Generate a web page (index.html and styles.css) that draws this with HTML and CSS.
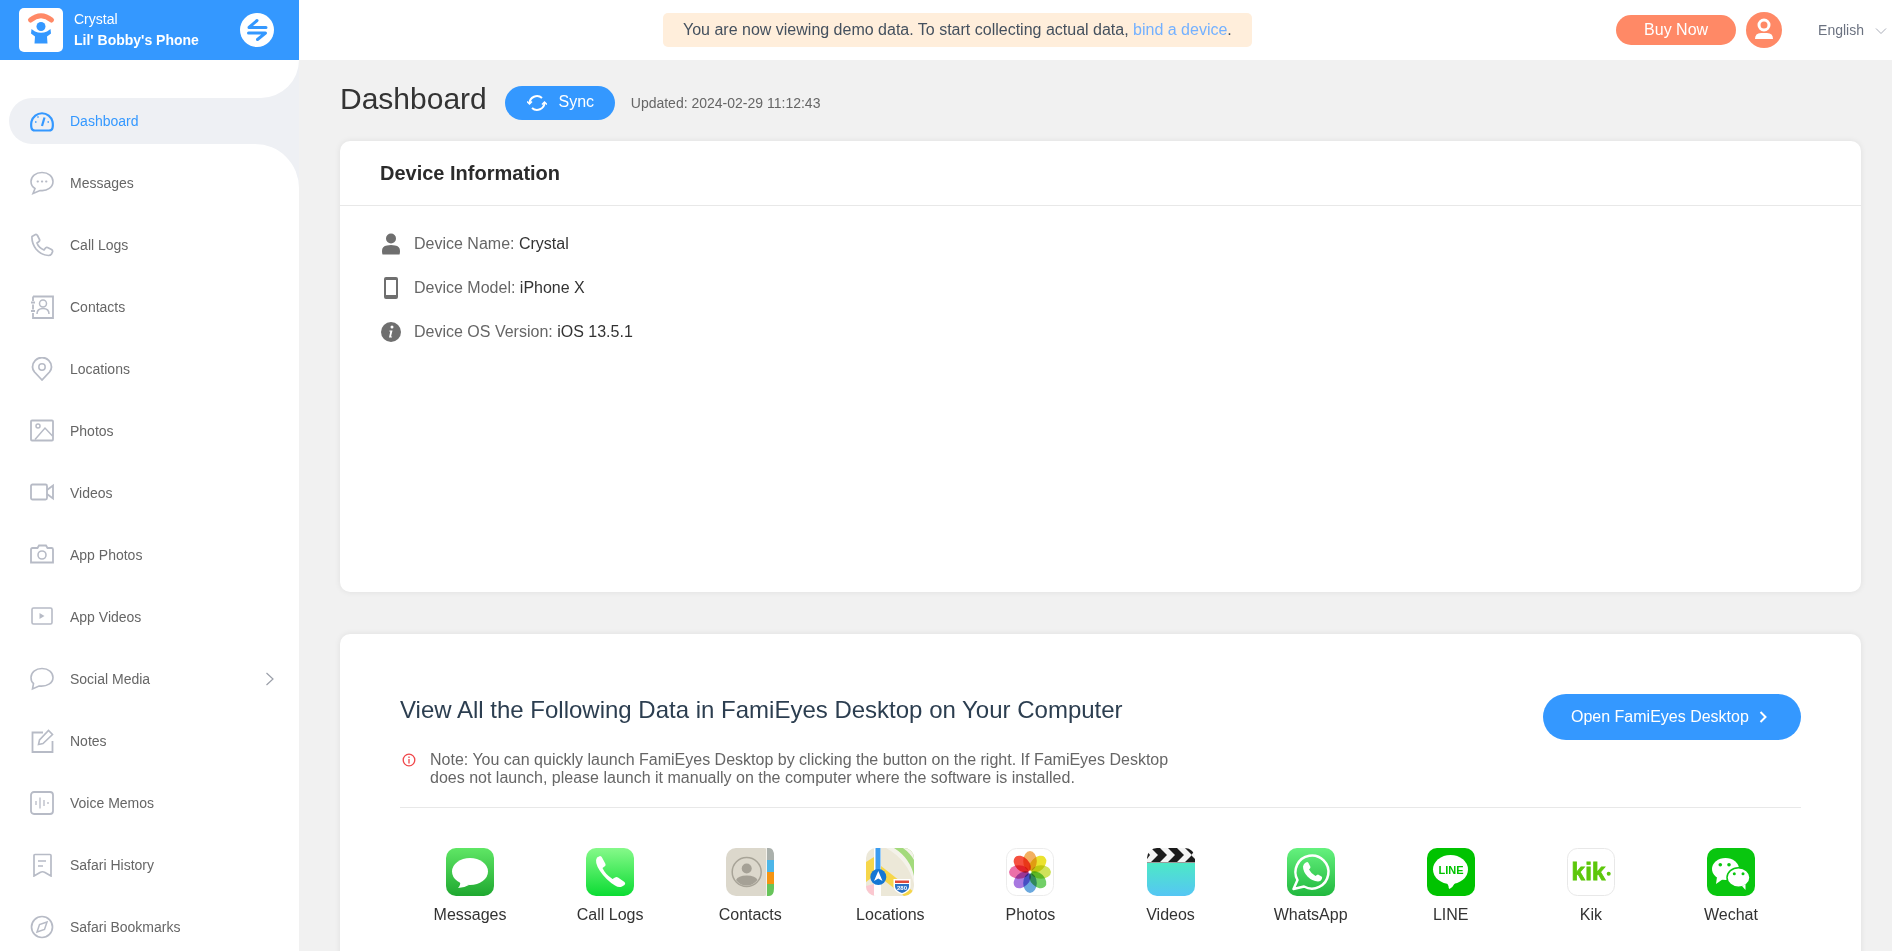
FILE: index.html
```html
<!DOCTYPE html>
<html lang="en">
<head>
    <meta charset="UTF-8">
    <meta name="viewport" content="width=device-width, initial-scale=1.0">
    <title>Dashboard</title>
    <link rel="stylesheet" href="styles.css">
</head>
<body>
    <header class="topbar">
        <div class="device">
            <div class="logo">
                <svg width="44" height="44" viewBox="0 0 44 44">
                    <path d="M11.500 12Q22 3.500 32.500 12" fill="none" stroke="#ff8966" stroke-width="5" stroke-linecap="round"/>
                    <circle cx="22" cy="18.500" r="4.500" fill="#3498ff"/>
                    <path d="M12.500 21L16 23.500Q22 26 28 23.500L31.500 21L32 25.500L28 28.500L28.500 35.500L15.500 35.500L16 28.500L12 25.500Z" fill="#3498ff"/>
                </svg>
            </div>
            <div class="device-text">
                <p>Crystal</p>
                <p class="device-phone">Lil' Bobby's Phone</p>
            </div>
            <div class="switch">
                <svg width="34" height="34" viewBox="0 0 34 34" fill="none" stroke="#3498ff" stroke-width="3" stroke-linecap="round" stroke-linejoin="round">
                    <path d="M26 14.500H9L17 7.500"/>
                    <path d="M8.500 20H25.500L17.500 26.500"/>
                </svg>
            </div>
        </div>
        <div class="banner">You are now viewing demo data. To start collecting actual data, <a href="#">bind a device</a>.</div>
        <div class="actions">
            <button type="button" class="buy">Buy Now</button>
            <div class="avatar">
                <svg width="36" height="36" viewBox="0 0 36 36" fill="#fff">
                    <circle cx="18" cy="13" r="5" fill="none" stroke="#fff" stroke-width="3"/>
                    <path d="M9 27Q9 21 15 21L21 21Q27 21 27 27Z"/>
                </svg>
            </div>
            <div class="lang">
                <span>English</span>
                <svg width="12" height="8" viewBox="0 0 12 8" fill="none" stroke="#a9adb8"><path d="M1 1.500L6 6.500L11 1.500"/></svg>
            </div>
        </div>
    </header>

    <div class="layout">
        <aside class="sidebar">
            <div class="side-top"></div>
            <div class="side-active">
                <a href="#" class="nav-item active">
                    <svg class="nav-icon" viewBox="0 0 24 24"><path d="M5 21.500Q2 21.500 1.500 19Q.8 16 1.500 12.500A10.800 10.800 0 0 1 22.500 12.500Q23.200 16 22.500 19Q22 21.500 19 21.500Z"/><path d="M14.500 8.500L12 17"/><path d="M5 13H6.500M17.500 13H19M7.500 7.500L8.500 8.500" stroke-width="1.500"/></svg>
                    Dashboard
                </a>
            </div>
            <nav class="side-rest">
                <a href="#" class="nav-item">
                    <svg class="nav-icon" viewBox="0 0 24 24"><path d="M12 1.500C5.500 1.500 1 5.500 1 10.500C1 13.500 2.500 16 5 17.500L3 22.500L10 19.500C17.500 20.500 23 16 23 10.500C23 5.500 18.500 1.500 12 1.500Z" stroke-width="1.600"/><path d="M7.500 10.500H8M11.800 10.500H12.300M16 10.500H16.500" stroke-linecap="round"/></svg>
                    Messages
                </a>
                <a href="#" class="nav-item">
                    <svg class="nav-icon" viewBox="0 0 24 24"><path d="M2 3.500L5.500 1.500Q6.500 1 7.500 2.500L9.500 6.500Q10 7.500 9 8.500L7 10Q8.500 14.500 14 17L15.500 15Q16.500 14 17.500 14.500L21.500 16.500Q23 17.500 22.500 19L21.500 21Q20.500 22.500 18.500 22.500Q11 22 6 16Q1.500 10 2 3.500Z" stroke-width="1.700"/></svg>
                    Call Logs
                </a>
                <a href="#" class="nav-item">
                    <svg class="nav-icon" viewBox="0 0 24 24"><path d="M3 1.500H23V23H3V18M3 14.500V9.500M3 6V1.500"/><path d="M1 7.500H5M1 16H5"/><circle cx="13" cy="8.500" r="3.500" stroke-width="1.500"/><path d="M7 19Q7 13.500 13 13.500Q19 13.500 19 19" stroke-width="1.500"/></svg>
                    Contacts
                </a>
                <a href="#" class="nav-item">
                    <svg class="nav-icon" viewBox="0 0 24 24"><path d="M12 23L4.500 15Q2.500 12.500 2.500 10A9.500 9.500 0 0 1 21.500 10Q21.500 12.500 19.500 15Z"/><circle cx="12" cy="10" r="3.200" stroke-width="1.500"/></svg>
                    Locations
                </a>
                <a href="#" class="nav-item">
                    <svg class="nav-icon" viewBox="0 0 24 24"><rect x="1" y="1.500" width="22" height="20" rx="1"/><circle cx="8" cy="7" r="2" stroke-width="1.500"/><path d="M5 20.500L15 9L22.500 17" stroke-width="1.500"/></svg>
                    Photos
                </a>
                <a href="#" class="nav-item">
                    <svg class="nav-icon" viewBox="0 0 24 24"><rect x="1" y="3.500" width="16" height="15" rx="1.500"/><path d="M17 9L23 4.500V17.500L17 13"/></svg>
                    Videos
                </a>
                <a href="#" class="nav-item">
                    <svg class="nav-icon" viewBox="0 0 24 24"><path d="M2.500 5H7.500L9 2.500H16L17.500 5H21.500Q23 5 23 6.500V19.500H1V6.500Q1 5 2.500 5Z"/><circle cx="12" cy="12" r="4" stroke-width="1.600"/></svg>
                    App Photos
                </a>
                <a href="#" class="nav-item">
                    <svg class="nav-icon" viewBox="0 0 24 24"><rect x="2" y="3" width="20" height="16" rx="1.500" stroke-width="1.600"/><path d="M9.500 8L14.500 11L9.500 14Z" fill="#b7bbc6" stroke="none"/></svg>
                    App Videos
                </a>
                <a href="#" class="nav-item">
                    <svg class="nav-icon" viewBox="0 0 24 24"><path d="M12 1.500C5.500 1.500 1 5.500 1 10.500C1 13.500 2 15.500 3.500 16.500L2.500 22L9 19C17 20 23 16 23 10.500C23 5.500 18.500 1.500 12 1.500Z" stroke-width="1.600"/></svg>
                    Social Media
                    <svg class="nav-arrow" width="10" height="14" viewBox="0 0 10 14" fill="none" stroke="#9b9fa9" stroke-width="1.200"><path d="M1.500 1L8 7L1.500 13"/></svg>
                </a>
                <a href="#" class="nav-item">
                    <svg class="nav-icon" viewBox="0 0 24 24"><path d="M13 3.500H2.500V23H22.500V12"/><path d="M8.500 15.500L9.500 11L18.500 1.500L22.500 5.500L13 14.500Z" stroke-width="1.600"/></svg>
                    Notes
                </a>
                <a href="#" class="nav-item">
                    <svg class="nav-icon" viewBox="0 0 24 24"><rect x="1" y="1" width="22" height="22" rx="3"/><path d="M6 10V14M10 6.500V17.500M14 9V15M18 11V13" stroke-width="1.300"/></svg>
                    Voice Memos
                </a>
                <a href="#" class="nav-item">
                    <svg class="nav-icon" viewBox="0 0 24 24"><path d="M4 2.500Q4 1.500 5 1.500H20Q21 1.500 21 2.500V23L15 19.500Q12.500 18 10 19.500L4 23Z" stroke-width="1.700"/><path d="M8 8H16M8 13H13" stroke-width="1.500"/></svg>
                    Safari History
                </a>
                <a href="#" class="nav-item">
                    <svg class="nav-icon" viewBox="0 0 24 24"><circle cx="12" cy="12" r="10.500" stroke-width="1.700"/><path d="M17 7L14.500 14.500L7 17L9.500 9.500Z" stroke-width="1.500"/></svg>
                    Safari Bookmarks
                </a>
            </nav>
        </aside>

        <main class="content">
            <div class="page-head">
                <h1>Dashboard</h1>
                <button type="button" class="sync">
                    <svg width="20" height="18" viewBox="0 0 20 18" fill="none" stroke="#fff" stroke-width="2"><path d="M2.500 9.500A7.500 7.500 0 0 1 15 4"/><path d="M17.500 8.500A7.500 7.500 0 0 1 5 14"/><path d="M0 7.500L2.500 10L5 7.500M15 10.500L17.500 8L20 10.500" stroke-width="1.500"/></svg>
                    <span>Sync</span>
                </button>
                <span class="updated">Updated: 2024-02-29 11:12:43</span>
            </div>

            <section class="card info-card">
                <h2>Device Information</h2>
                <ul class="info-list">
                    <li>
                        <svg width="20" height="22" viewBox="0 0 20 22" fill="#6f6f6f"><circle cx="10" cy="5.500" r="5"/><path d="M1.500 21.500Q1 20 1 18Q1 13 6 12.500Q10 11.500 14 12.500Q19 13 19 18Q19 20 18.500 21.500Z"/></svg>
                        <span>Device Name: <b>Crystal</b></span>
                    </li>
                    <li>
                        <svg width="20" height="22" viewBox="0 0 20 22" fill="#6f6f6f"><path d="M5 0H15Q17 0 17 2V20Q17 22 15 22H5Q3 22 3 20V2Q3 0 5 0ZM5 3V18H15V3Z" fill-rule="evenodd"/></svg>
                        <span>Device Model: <b>iPhone X</b></span>
                    </li>
                    <li>
                        <svg width="20" height="22" viewBox="0 0 20 22"><circle cx="10" cy="11" r="10" fill="#6f6f6f"/><circle cx="11" cy="6" r="1.500" fill="#fff"/><path d="M8.500 9.500H11.500L10 15.500H11.200L10.800 16.500H8L9.300 10.500H8.300Z" fill="#fff"/></svg>
                        <span>Device OS Version: <b>iOS 13.5.1</b></span>
                    </li>
                </ul>
            </section>

            <section class="card desktop-card">
                <div class="desktop-head">
                    <div>
                        <h2>View All the Following Data in FamiEyes Desktop on Your Computer</h2>
                        <div class="note">
                            <svg width="14" height="14" viewBox="0 0 14 14" fill="none" stroke="#f0474a" stroke-width="1.300"><circle cx="7" cy="7" r="5.800"/><path d="M7 6V10.500M7 3.500V5"/></svg>
                            <p>Note: You can quickly launch FamiEyes Desktop by clicking the button on the right. If FamiEyes Desktop does not launch, please launch it manually on the computer where the software is installed.</p>
                        </div>
                    </div>
                    <button type="button" class="open">
                        Open FamiEyes Desktop
                        <svg width="9" height="14" viewBox="0 0 9 14" fill="none" stroke="#fff" stroke-width="2"><path d="M1.500 2L6.500 7L1.500 12"/></svg>
                    </button>
                </div>
                <div class="apps">
                    <div class="app">
                        <svg class="app-icon" viewBox="0 0 48 48">
                            <defs><linearGradient id="gMsg" x1="0" y1="0" x2="0" y2="1"><stop offset="0" stop-color="#5fe665"/><stop offset="1" stop-color="#1fa830"/></linearGradient></defs>
                            <rect width="48" height="48" rx="10" fill="url(#gMsg)"/>
                            <ellipse cx="24" cy="23.500" rx="18" ry="13.500" fill="#fff"/>
                            <path d="M14 33Q15 37 12 40Q18 40 23 37Z" fill="#fff"/>
                        </svg>
                        <span>Messages</span>
                    </div>
                    <div class="app">
                        <svg class="app-icon" viewBox="0 0 48 48">
                            <defs><linearGradient id="gCall" x1="0" y1="0" x2="0" y2="1"><stop offset="0" stop-color="#86f98a"/><stop offset="1" stop-color="#0bdc33"/></linearGradient></defs>
                            <rect width="48" height="48" rx="10" fill="url(#gCall)"/>
                            <path d="M11 9.500L14 8Q15.500 8 16 9.500L19.500 16Q20 17.500 18.500 18.500L16.500 20Q19 26 26.500 31L29 29.500Q30.500 28.500 32 29.500L38.500 34Q40 35.500 38.500 37L36 38.500Q33 40 29 37.500Q20 32 14 23Q8 14 11 9.500Z" fill="#fff"/>
                        </svg>
                        <span>Call Logs</span>
                    </div>
                    <div class="app">
                        <svg class="app-icon" viewBox="0 0 48 48">
                            <rect width="48" height="48" rx="10" fill="#dcd8cc"/>
                            <path d="M41 0H43Q48 0 48 8V12H41Z" fill="#aab0ac"/>
                            <rect x="41" y="12" width="7" height="12" fill="#4db6e8"/>
                            <rect x="41" y="24" width="7" height="12" fill="#f59412"/>
                            <path d="M41 36H48V40Q48 48 43 48H41Z" fill="#67c45a"/>
                            <rect x="40" width="1" height="48" fill="#f4f2ec"/>
                            <circle cx="20.700" cy="24" r="14.500" fill="none" stroke="#a8a498" stroke-width="1.500"/>
                            <circle cx="20.700" cy="20.500" r="5" fill="#a5a196"/>
                            <path d="M10 32Q12 27.500 20.700 27.500Q29.500 27.500 31.500 32Q27 37.500 20.700 37.500Q14 37.500 10 32Z" fill="#a5a196"/>
                        </svg>
                        <span>Contacts</span>
                    </div>
                    <div class="app">
                        <svg class="app-icon" viewBox="0 0 48 48">
                            <defs><clipPath id="cMap"><rect width="48" height="48" rx="10"/></clipPath></defs>
                            <g clip-path="url(#cMap)">
                                <rect width="48" height="48" fill="#ece8d8"/>
                                <path d="M20 0H48V36Q42 12 20 0Z" fill="#f4f2ea"/>
                                <path d="M28 0H48V28Q44 10 28 0Z" fill="#a3da7c"/>
                                <path d="M37 0H48V12Q44 5 37 0Z" fill="#f4f2ea"/>
                                <path d="M0 14L8 9V28L0 34Z" fill="#f6d64a"/>
                                <path d="M15 18L48 44V48H38L15 30Z" fill="#f6d64a"/>
                                <path d="M0 38L8 36V48H0Z" fill="#fbc8d0"/>
                                <rect x="8" y="0" width="7" height="48" fill="#fff"/>
                                <rect x="9.500" y="0" width="5" height="28" fill="#3b9cf0"/>
                                <circle cx="12.300" cy="29" r="8" fill="#1477d4"/>
                                <path d="M12.300 23L16.500 33L12.300 30.500L8 33Z" fill="#fff"/>
                                <path d="M27.500 31H44.500V39Q44 44 36 46.500Q28 44 27.500 39Z" fill="#fff"/>
                                <path d="M29 36H43V39Q42 43 36 45Q30 43 29 39Z" fill="#2b72c4"/>
                                <rect x="29" y="32.500" width="14" height="2.500" fill="#e04a3a"/>
                                <text x="36" y="42" class="map-text">280</text>
                            </g>
                        </svg>
                        <span>Locations</span>
                    </div>
                    <div class="app">
                        <svg class="app-icon" viewBox="0 0 48 48">
                            <rect x=".5" y=".5" width="47" height="47" rx="10" fill="#fff" stroke="#ececec"/>
                            <g class="petals">
                                <ellipse cx="24" cy="13" rx="6.800" ry="10" fill="#f3b060"/>
                                <ellipse cx="24" cy="13" rx="6.800" ry="10" fill="#ebe22e" transform="rotate(45 24 24)"/>
                                <ellipse cx="24" cy="13" rx="6.800" ry="10" fill="#cfe25a" transform="rotate(90 24 24)"/>
                                <ellipse cx="24" cy="13" rx="6.800" ry="10" fill="#72d068" transform="rotate(135 24 24)"/>
                                <ellipse cx="24" cy="13" rx="6.800" ry="10" fill="#6aa8de" transform="rotate(180 24 24)"/>
                                <ellipse cx="24" cy="13" rx="6.800" ry="10" fill="#a878e0" transform="rotate(225 24 24)"/>
                                <ellipse cx="24" cy="13" rx="6.800" ry="10" fill="#ec70a8" transform="rotate(270 24 24)"/>
                                <ellipse cx="24" cy="13" rx="6.800" ry="10" fill="#f5503f" transform="rotate(315 24 24)"/>
                            </g>
                            <circle cx="24" cy="24" r="1.500" fill="#fff"/>
                        </svg>
                        <span>Photos</span>
                    </div>
                    <div class="app">
                        <svg class="app-icon" viewBox="0 0 48 48">
                            <defs>
                                <linearGradient id="gVid" x1="0" y1="0" x2="0" y2="1"><stop offset="0" stop-color="#4de8c6"/><stop offset="1" stop-color="#55c6f4"/></linearGradient>
                                <clipPath id="cVid"><rect width="48" height="48" rx="10"/></clipPath>
                            </defs>
                            <g clip-path="url(#cVid)">
                                <rect y="15" width="48" height="33" fill="url(#gVid)"/>
                                <rect width="48" height="14" fill="#f4f4f4"/>
                                <rect y="14" width="48" height="1" fill="#9a9a9a"/>
                                <path d="M0 3L3 7L0 11ZM4 0H13L20 7L13 14H4L11 7ZM21 0H30L37 7L30 14H21L28 7ZM38 0H48V3L44 7L48 11V14H38L45 7Z" fill="#1c1c1c"/>
                            </g>
                        </svg>
                        <span>Videos</span>
                    </div>
                    <div class="app">
                        <svg class="app-icon" viewBox="0 0 48 48">
                            <defs><linearGradient id="gWa" x1="0" y1="0" x2="0" y2="1"><stop offset="0" stop-color="#65f17e"/><stop offset="1" stop-color="#21b83e"/></linearGradient></defs>
                            <rect width="48" height="48" rx="10" fill="url(#gWa)"/>
                            <path d="M6.500 41L10.500 32A16.500 16.500 0 1 1 17 38.500Z" fill="none" stroke="#fff" stroke-width="2.500" stroke-linejoin="round"/>
                            <path d="M18 15L20 14Q21 14 21.500 15L23.500 19Q23.500 20 22 21.500Q24 25.500 28.500 28Q30 26.500 31 26.500L34.500 28.500Q35.500 29 35 30.500Q34 33.500 31 33.500Q25 33 20.500 28.500Q16 23.500 16 18.500Q16.500 16 18 15Z" fill="#fff"/>
                        </svg>
                        <span>WhatsApp</span>
                    </div>
                    <div class="app">
                        <svg class="app-icon" viewBox="0 0 48 48">
                            <rect width="48" height="48" rx="10" fill="#00c300"/>
                            <ellipse cx="23.500" cy="21.500" rx="17.500" ry="14.500" fill="#fff"/>
                            <path d="M20 35H28Q26 39 22.500 41Q21.500 41 21.500 38Z" fill="#fff"/>
                            <text x="24" y="25.500" class="line-text">LINE</text>
                        </svg>
                        <span>LINE</span>
                    </div>
                    <div class="app">
                        <svg class="app-icon" viewBox="0 0 48 48">
                            <rect x=".5" y=".5" width="47" height="47" rx="10" fill="#fff" stroke="#e8e8e8"/>
                            <text x="4.500" y="32" class="kik-text">kik</text>
                            <circle cx="41.700" cy="25.700" r="2" fill="#5cc70a"/>
                        </svg>
                        <span>Kik</span>
                    </div>
                    <div class="app">
                        <svg class="app-icon" viewBox="0 0 48 48">
                            <rect width="48" height="48" rx="10" fill="#09c60f"/>
                            <ellipse cx="18.500" cy="21" rx="13.500" ry="11" fill="#fff"/>
                            <path d="M10 29L9 36L16 31Z" fill="#fff"/>
                            <ellipse cx="31.500" cy="29.500" rx="11.500" ry="9.800" fill="#fff" stroke="#09c60f" stroke-width="1.500"/>
                            <path d="M35 38L38.500 42L38.500 36Z" fill="#fff"/>
                            <circle cx="13.300" cy="16.700" r="1.800" fill="#09c60f"/><circle cx="22" cy="16.700" r="1.800" fill="#09c60f"/>
                            <circle cx="27.300" cy="25.700" r="1.500" fill="#09c60f"/><circle cx="36" cy="25.700" r="1.500" fill="#09c60f"/>
                        </svg>
                        <span>Wechat</span>
                    </div>
                </div>
            </section>
        </main>
    </div>
</body>
</html>
```

FILE: styles.css
```css
*{
    margin: 0px;
    padding: 0px;
    box-sizing: border-box;
}

html, body{
    height: 100%;
    overflow: hidden;
}

body{
    display: flex;
    flex-direction: column;
    font-family: "Liberation Sans", Arial, sans-serif;
    background-color: #f1f1f1;
    color: #333;
}

a{
    text-decoration: none;
}

button{
    border: 0px;
    font-family: inherit;
    cursor: pointer;
}

/* 頂部 */
.topbar{
    display: flex;
    align-items: center;
    flex: none;
    height: 60px;
    background-color: #fff;
}

.device{
    display: flex;
    align-items: center;
    width: 299px;
    height: 60px;
    padding-left: 19px;
    background-color: #3498ff;
    color: #fff;
}

.logo{
    width: 44px;
    height: 44px;
    border-radius: 5px;
    background-color: #fff;
}

.device-text{
    margin-left: 11px;
    font-size: 14px;
    line-height: 21px;
}

.device-phone{
    font-weight: bold;
}

.switch{
    display: flex;
    width: 34px;
    height: 34px;
    margin-left: auto;
    margin-right: 25px;
    border-radius: 50%;
    background-color: #fff;
}

.banner{
    height: 34px;
    line-height: 34px;
    margin-left: 364px;
    padding: 0px 20px;
    border-radius: 5px;
    font-size: 16px;
    background-color: #ffeedb;
    color: #44505e;
}

.banner a{
    color: #74b1ff;
}

.actions{
    display: flex;
    align-items: center;
    margin-left: auto;
}

.buy{
    width: 120px;
    height: 30px;
    border-radius: 15px;
    font-size: 16px;
    background-color: #ff8966;
    color: #fff;
}

.avatar{
    display: flex;
    width: 36px;
    height: 36px;
    margin-left: 10px;
    border-radius: 50%;
    background-color: #ff8966;
}

.lang{
    display: flex;
    align-items: center;
    gap: 11px;
    margin-left: 36px;
    padding-right: 5px;
    font-size: 14px;
    color: #6b7280;
}

.lang svg{
    margin-top: 1px;
}

.layout{
    display: flex;
    flex: 1;
    min-height: 0px;
}

/* 側邊欄 */
.sidebar{
    display: flex;
    flex-direction: column;
    flex: none;
    width: 299px;
    background-color: #eef0f4;
}

.side-top{
    flex: none;
    height: 38px;
    border-bottom-right-radius: 42px;
    background-color: #fff;
}

.side-active{
    flex: none;
    padding-left: 9px;
    background-color: #fff;
}

.side-rest{
    flex: 1 0 auto;
    padding-top: 16px;
    border-top-right-radius: 44px;
    background-color: #fff;
}

.nav-item{
    display: flex;
    align-items: center;
    height: 46px;
    margin-bottom: 16px;
    padding-left: 30px;
    font-size: 14px;
    color: #666;
}

.nav-item.active{
    margin-bottom: 0px;
    padding-left: 21px;
    border-radius: 23px 0px 0px 23px;
    background-color: #eef0f4;
    color: #3498ff;
}

.nav-icon{
    flex: none;
    width: 24px;
    height: 24px;
    margin-right: 16px;
    fill: none;
    stroke: #b7bbc6;
    stroke-width: 1.800;
}

.active .nav-icon{
    stroke: #3498ff;
    stroke-width: 2.200;
}

.nav-arrow{
    margin-left: auto;
    margin-right: 24px;
}

/* 內容 */
.content{
    flex: 1;
    min-width: 0px;
    padding: 0px 31px 0px 41px;
}

.page-head{
    display: flex;
    align-items: center;
    height: 81px;
    padding-top: 5px;
}

h1{
    font-size: 30px;
    font-weight: normal;
    margin-top: -8px;
}

.sync{
    display: flex;
    align-items: center;
    justify-content: center;
    gap: 11px;
    width: 110px;
    height: 34px;
    margin-left: 18px;
    padding-left: 2px;
    border-radius: 17px;
    font-size: 16px;
    background-color: #3498ff;
    color: #fff;
}

.sync span{
    margin-bottom: 2px;
}

.updated{
    margin-left: 16px;
    margin-bottom: 1px;
    font-size: 14px;
    color: #666;
}

.card{
    border-radius: 10px;
    background-color: #fff;
    box-shadow: 0px 0px 6px rgba(0, 0, 0, 0.08);
}

.info-card{
    height: 451px;
    margin-bottom: 42px;
}

.info-card h2{
    height: 65px;
    line-height: 64px;
    padding-left: 40px;
    border-bottom: #e8e8e8 solid 1px;
    font-size: 20px;
    color: #2b2b2b;
}

.info-list{
    list-style: none;
    padding: 16px 0px 0px 41px;
}

.info-list li{
    display: flex;
    align-items: center;
    gap: 13px;
    height: 44px;
    font-size: 16px;
    color: #666;
}

.info-list b{
    font-weight: normal;
    color: #333;
}

.desktop-card{
    padding: 60px 60px 60px;
}

.desktop-head{
    display: flex;
    justify-content: space-between;
    height: 114px;
    border-bottom: #e8e8e8 solid 1px;
}

.desktop-head h2{
    font-size: 24px;
    font-weight: normal;
    line-height: 32px;
    color: #2c3e50;
}

.note{
    display: flex;
    gap: 14px;
    width: 785px;
    margin-top: 25px;
    margin-left: 2px;
    font-size: 16px;
    line-height: 18px;
    color: #666;
}

.note svg{
    flex: none;
    margin-top: 2px;
}

.open{
    display: flex;
    align-items: center;
    gap: 10px;
    flex: none;
    width: 258px;
    height: 46px;
    padding-left: 28px;
    border-radius: 23px;
    font-size: 16px;
    background-color: #3498ff;
    color: #fff;
}

.apps{
    display: grid;
    grid-template-columns: repeat(10, 1fr);
    padding-top: 40px;
}

.app{
    display: flex;
    flex-direction: column;
    align-items: center;
    font-size: 16px;
    color: #333;
}

.app-icon{
    width: 48px;
    height: 48px;
    margin-bottom: 10px;
}

.petals ellipse{
    mix-blend-mode: multiply;
}

.map-text{
    font-family: "Liberation Sans", Arial, sans-serif;
    font-size: 6px;
    font-weight: bold;
    text-anchor: middle;
    fill: #fff;
}

.line-text{
    font-family: "Liberation Sans", Arial, sans-serif;
    font-size: 11px;
    font-weight: bold;
    text-anchor: middle;
    fill: #00c300;
}

.kik-text{
    font-family: "Liberation Sans", Arial, sans-serif;
    font-size: 24px;
    font-weight: bold;
    letter-spacing: 0.300px;
    fill: #5cc70a;
    stroke: #5cc70a;
    stroke-width: 0.800px;
}
```
